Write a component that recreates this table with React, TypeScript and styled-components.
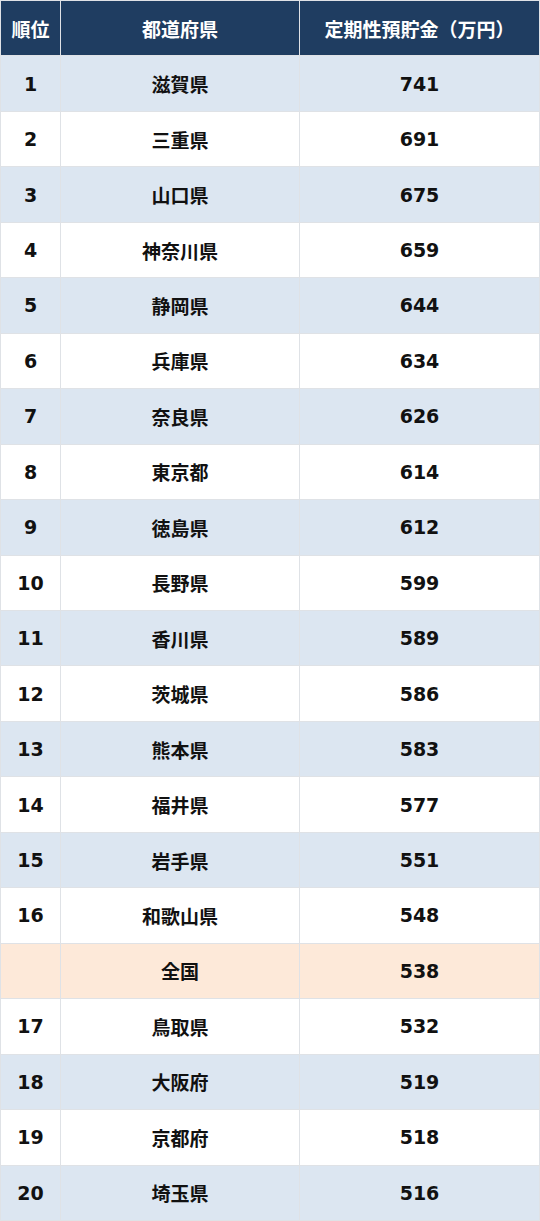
import React from "react";
import styled, { createGlobalStyle } from "styled-components";

const Global = createGlobalStyle`
  html, body { margin: 0; padding: 0; background: #ffffff; }
  #root { width: 540px; }
`;

type Row = { rank: string; name: string; value: string; national?: boolean };

const rows: Row[] = [
  { rank: "1", name: "滋賀県", value: "741" },
  { rank: "2", name: "三重県", value: "691" },
  { rank: "3", name: "山口県", value: "675" },
  { rank: "4", name: "神奈川県", value: "659" },
  { rank: "5", name: "静岡県", value: "644" },
  { rank: "6", name: "兵庫県", value: "634" },
  { rank: "7", name: "奈良県", value: "626" },
  { rank: "8", name: "東京都", value: "614" },
  { rank: "9", name: "徳島県", value: "612" },
  { rank: "10", name: "長野県", value: "599" },
  { rank: "11", name: "香川県", value: "589" },
  { rank: "12", name: "茨城県", value: "586" },
  { rank: "13", name: "熊本県", value: "583" },
  { rank: "14", name: "福井県", value: "577" },
  { rank: "15", name: "岩手県", value: "551" },
  { rank: "16", name: "和歌山県", value: "548" },
  { rank: "", name: "全国", value: "538", national: true },
  { rank: "17", name: "鳥取県", value: "532" },
  { rank: "18", name: "大阪府", value: "519" },
  { rank: "19", name: "京都府", value: "518" },
  { rank: "20", name: "埼玉県", value: "516" },
];

const Table = styled.div`
  display: grid;
  grid-template-columns: 59px 238px 1fr;
  grid-template-rows: repeat(22, 1fr);
  gap: 1px;
  padding: 1px;
  width: 540px;
  height: 1221px;
  box-sizing: border-box;
  background: #dfe2e6;
  font-family: "DejaVu Sans", "Noto Sans CJK JP", sans-serif;
  font-weight: 700;
`;

const HeadCell = styled.div`
  display: flex;
  align-items: center;
  justify-content: center;
  background: #1f3d61;
  color: #ffffff;
  font-size: 19px;
  letter-spacing: 0;
`;

const Cell = styled.div<{ $tone: "blue" | "white" | "orange" }>`
  display: flex;
  align-items: center;
  justify-content: center;
  background: ${(p) =>
    p.$tone === "blue" ? "#dce6f1" : p.$tone === "orange" ? "#fde9d9" : "#ffffff"};
  color: #111111;
  font-size: 19px;
`;

export default function App() {
  return (
    <>
      <Global />
      <Table>
        <HeadCell>順位</HeadCell>
        <HeadCell>都道府県</HeadCell>
        <HeadCell>定期性預貯金（万円）</HeadCell>
        {rows.map((r, i) => {
          const tone = r.national ? "orange" : i % 2 === 0 ? "blue" : "white";
          return (
            <React.Fragment key={i}>
              <Cell $tone={tone}>{r.rank}</Cell>
              <Cell $tone={tone}>{r.name}</Cell>
              <Cell $tone={tone}>{r.value}</Cell>
            </React.Fragment>
          );
        })}
      </Table>
    </>
  );
}
